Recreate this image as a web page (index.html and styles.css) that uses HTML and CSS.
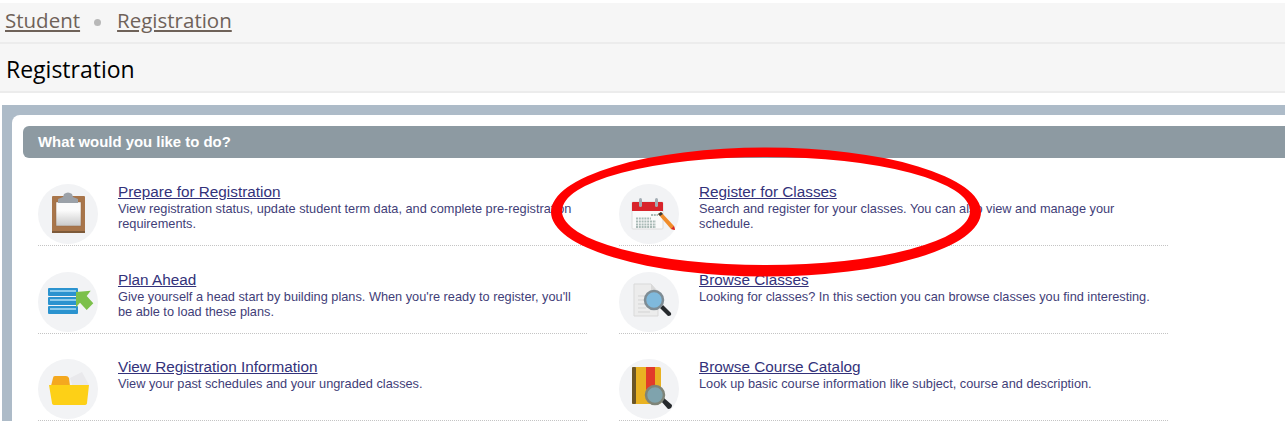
FILE: index.html
```html
<!DOCTYPE html>
<html lang="en">
<head>
    <meta charset="UTF-8" />
    <title>Registration</title>
    <link rel="stylesheet" href="styles.css">
</head>
<body>
<div class="breadcrumb">
    <a href="#">Student</a>
    <span class="crumb-dot"></span>
    <a href="#">Registration</a>
</div>
<h1 class="page-title">Registration</h1>

<div class="band">
    <div class="panel">
        <div class="panel-head">What would you like to do?</div>
        <div class="actions">

            <div class="action">
                <svg class="action-icon" viewBox="0 0 60 60">
                    <defs>
                        <linearGradient id="paper" x1="0" y1="0" x2="0" y2="1">
                            <stop offset="0.35" stop-color="#fbfbfb"/>
                            <stop offset="1" stop-color="#c9c9c9"/>
                        </linearGradient>
                    </defs>
                    <circle cx="30" cy="30" r="30" fill="#f2f3f5"/>
                    <rect x="14" y="12" width="33" height="37" rx="1" fill="#a8754a"/>
                    <rect x="14" y="47" width="33" height="2" fill="#7d5a3a"/>
                    <rect x="18" y="18" width="25" height="24" fill="url(#paper)" stroke="#8f6a48" stroke-width="0.5"/>
                    <path d="M20 19v-4l5-2 1-3q4-3 8 0l1 3 5 2v4z" fill="#9ba1a8"/>
                </svg>
                <div class="action-text">
                    <a class="action-link" href="#">Prepare for Registration</a>
                    <p>View registration status, update student term data, and complete pre-registration requirements.</p>
                </div>
            </div>

            <div class="action">
                <svg class="action-icon" viewBox="0 0 60 60">
                    <circle cx="30" cy="30" r="30" fill="#f2f3f5"/>
                    <rect x="13" y="18" width="31" height="27" rx="1" fill="#fafafa" stroke="#dcdcdc"/>
                    <path d="M13 19q0-1 1-1h29q1 0 1 1v8H13z" fill="#d8242b"/>
                    <rect x="20" y="14" width="3" height="9" rx="1.5" fill="#a3adb4"/>
                    <rect x="36" y="14" width="3" height="9" rx="1.5" fill="#a3adb4"/>
                    <path d="M16 32h2v2h-2zM16 36h23M16 39h23M16 42h23" fill="none"/>
                    <path d="M17 34.500h15M17 37.500h20M17 40.500h20M17 43h20M32 31h7" stroke="#a9bab6" stroke-width="2" stroke-dasharray="2 0.8"/>
                    <path d="M39 30l3-2 13 14 1 4-4-1z" fill="#f08c2a"/>
                    <path d="M39 30l3-2 2 2-3 2z" fill="#3a3a3a"/>
                    <path d="M52 45l3-3 1 4z" fill="#d8242b"/>
                </svg>
                <div class="action-text">
                    <a class="action-link" href="#">Register for Classes</a>
                    <p>Search and register for your classes. You can also view and manage your schedule.</p>
                </div>
            </div>

            <div class="action">
                <svg class="action-icon" viewBox="0 0 60 60">
                    <circle cx="30" cy="30" r="30" fill="#f2f3f5"/>
                    <rect x="10" y="16" width="30" height="8" rx="1" fill="#2b93cf"/>
                    <rect x="10" y="25" width="30" height="8" rx="1" fill="#2b93cf"/>
                    <rect x="10" y="34" width="30" height="8" rx="1" fill="#2b93cf"/>
                    <rect x="12" y="18" width="26" height="2" fill="#8ccbec"/>
                    <rect x="12" y="27" width="26" height="2" fill="#8ccbec"/>
                    <rect x="12" y="36" width="26" height="2" fill="#8ccbec"/>
                    <path d="M38 20l14.700-1.300-4 5.300 6.600 7.300-6.600 6.700-6.700-7.300-4 4.600z" fill="#7cc04b"/>
                </svg>
                <div class="action-text">
                    <a class="action-link" href="#">Plan Ahead</a>
                    <p>Give yourself a head start by building plans. When you're ready to register, you'll be able to load these plans.</p>
                </div>
            </div>

            <div class="action">
                <svg class="action-icon" viewBox="0 0 60 60">
                    <circle cx="30" cy="30" r="30" fill="#f2f3f5"/>
                    <path d="M15 12h17l7 8v24H15z" fill="#ececec" stroke="#d9d9d9"/>
                    <path d="M32 12v8h7z" fill="#d9d9d9"/>
                    <path d="M19 24h16M19 28h10M19 32h8M19 36h8M19 40h12" stroke="#d3d3d3"/>
                    <path d="M41 36l3-3 8 8q1 3-3 3z" fill="#26292c"/>
                    <circle cx="35" cy="28" r="9" fill="#7fb9dc" stroke="#7e8c94" stroke-width="2.5"/>
                </svg>
                <div class="action-text">
                    <a class="action-link" href="#">Browse Classes</a>
                    <p>Looking for classes? In this section you can browse classes you find interesting.</p>
                </div>
            </div>

            <div class="action">
                <svg class="action-icon" viewBox="0 0 60 60">
                    <circle cx="30" cy="30" r="30" fill="#f2f3f5"/>
                    <path d="M13 27l2-8q0-2 2-2h11q2 0 3 2l1 8z" fill="#f4a81f"/>
                    <path d="M32 19l12-6 7 13-15 6z" fill="#e9e9ec"/>
                    <path d="M11 26h40l-2 18q0 2-3 2H17q-3 0-3-2z" fill="#fdd017"/>
                </svg>
                <div class="action-text">
                    <a class="action-link" href="#">View Registration Information</a>
                    <p>View your past schedules and your ungraded classes.</p>
                </div>
            </div>

            <div class="action">
                <svg class="action-icon" viewBox="0 0 60 60">
                    <circle cx="30" cy="30" r="30" fill="#f2f3f5"/>
                    <rect x="13" y="8" width="29" height="37" rx="2" fill="#e9b222"/>
                    <rect x="13" y="8" width="4" height="37" rx="1" fill="#6b5526"/>
                    <path d="M27 8h9v23l-4-3-5 3z" fill="#e23b2a"/>
                    <path d="M42 42l3-3 8 7q0 4-4 4z" fill="#26292c"/>
                    <circle cx="36" cy="36" r="9" fill="#7fa3ad" stroke="#7e8478" stroke-width="2.5"/>
                </svg>
                <div class="action-text">
                    <a class="action-link" href="#">Browse Course Catalog</a>
                    <p>Look up basic course information like subject, course and description.</p>
                </div>
            </div>

        </div>
    </div>
</div>

<!-- red hand drawn ring on top of the page -->
<svg class="ring" viewBox="0 0 1285 421">
    <path fill="#ff0000" fill-rule="evenodd" d="M551 212a215 64.500 0 1 0 430 0a215 64.500 0 1 0 -430 0z M562 211a204 54 0 1 0 408 0a204 54 0 1 0 -408 0z"/>
</svg>
</body>
</html>
```

FILE: styles.css
```css
html, body {
    margin: 0;
    height: 421px;
    overflow: hidden;
    background: #fff;
    font-family: "Liberation Sans", Arial, sans-serif;
}
.breadcrumb {
    display: flex;
    align-items: center;
    box-sizing: border-box;
    height: 41px;
    margin-top: 3px;
    padding: 0 0 5px 5px;
    background: #f6f6f6;
    border-bottom: 2px solid #ececec;
    font-family: "Open Sans", sans-serif;
    font-size: 20.5px;
}
.breadcrumb a {
    color: #6f6259;
}
.crumb-dot {
    width: 7px;
    height: 7px;
    margin: 4px 16px 0 14px;
    border-radius: 50%;
    background: #b8b8b8;
}
.page-title {
    height: 47px;
    margin: 0;
    padding-left: 6px;
    background: #f6f6f6;
    border-bottom: 2px solid #ececec;
    font-family: "Open Sans", sans-serif;
    font-size: 23px;
    font-weight: 500;
    line-height: 50px;
    color: #000;
}
.band {
    margin: 12px 0 0 2px;
    padding: 10px 0 0 10px;
    background: #adbbc8;
}
.panel {
    padding: 11px 0 0 11px;
    background: #fff;
    border-radius: 8px 0 0 0;
}
.panel-head {
    height: 32px;
    padding-left: 15px;
    background: #8d9aa2;
    border-radius: 6px 0 0 6px;
    color: #fff;
    font-size: 14.9px;
    font-weight: bold;
    line-height: 32px;
}
.actions {
    display: grid;
    grid-template-columns: 549px 549px;
    column-gap: 32px;
    row-gap: 25.5px;
    margin: 26px 0 0 15px;
}
.action {
    display: flex;
    height: 61px;
    border-bottom: 1px dotted #c4c4c4;
}
.action-icon {
    flex: none;
    width: 60px;
    height: 60px;
    margin-right: 20px;
}
.action-link {
    display: block;
    font-size: 15.3px;
    line-height: 16px;
    color: #33327a;
}
.action-text p {
    margin: 1px 0 0;
    font-size: 12.75px;
    line-height: 15px;
    color: #3f3e78;
}
.ring {
    position: absolute;
    left: 0;
    top: 0;
    width: 1285px;
    height: 421px;
}
```
